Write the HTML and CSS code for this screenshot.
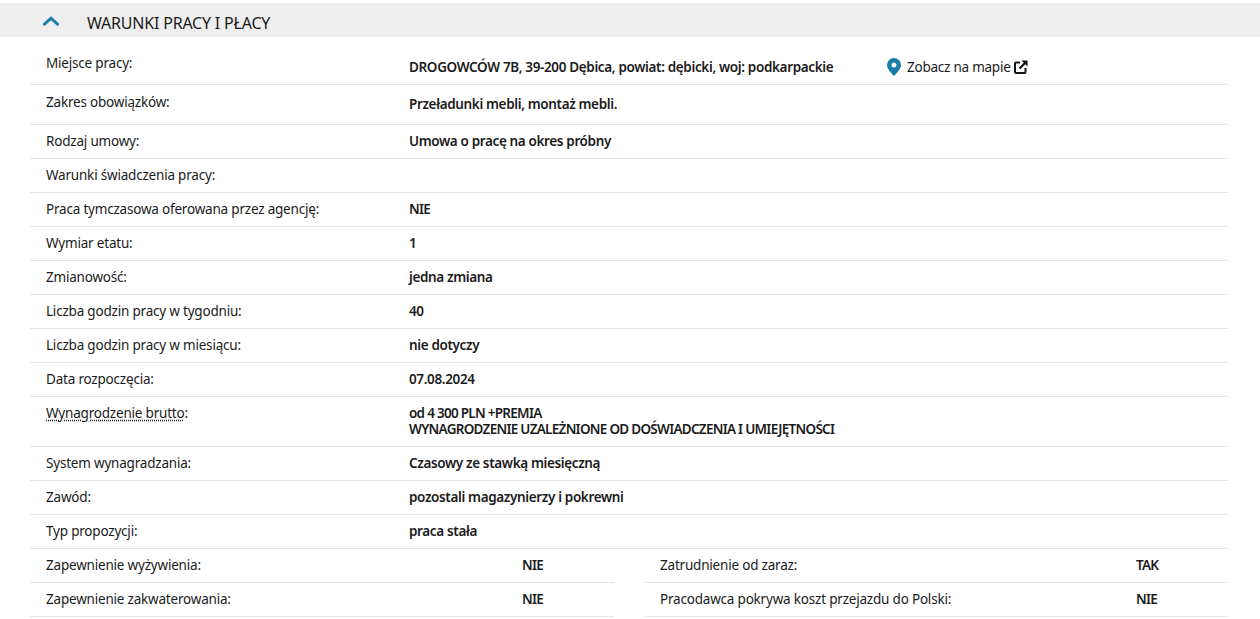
FILE: index.html
```html
<!DOCTYPE html>
<html lang="pl">
<head>
<meta charset="utf-8">
<title>Warunki pracy i płacy</title>
<link rel="stylesheet" href="styles.css">
</head>
<body>
<section class="panel">
  <header class="panel-head">
    <svg class="chevron" width="18" height="10" viewBox="0 0 18 10" aria-hidden="true"><path d="M1.500 9 9 2.200 16.500 9" fill="none" stroke="#1a7ea8" stroke-width="3"/></svg>
    <h2 class="panel-title">WARUNKI PRACY I PŁACY</h2>
  </header>
  <div class="rows">
    <div class="row row-first">
      <div class="label">Miejsce pracy:</div>
      <div class="value value-place">
        <span class="place">DROGOWCÓW 7B, 39-200 Dębica, powiat: dębicki, woj: podkarpackie</span>
        <a class="map-link">
          <svg class="pin" width="14" height="18" viewBox="0 0 14 18" aria-hidden="true"><path fill-rule="evenodd" fill="#1a7ea8" d="M7 0a7 7 0 0 1 7 7c0 3.500-3.500 7.500-7 11C3.500 14.500 0 10.500 0 7a7 7 0 0 1 7-7Zm0 4.500a2.500 2.500 0 1 0 0 5 2.500 2.500 0 0 0 0-5Z"/></svg>
          <span>Zobacz na mapie</span>
          <svg class="ext" width="14" height="14" viewBox="0 0 14 14" aria-hidden="true"><path d="M6 2.500H2A1 1 0 0 0 1 3.500v8.500a1 1 0 0 0 1 1h8.500a1 1 0 0 0 1-1V8" fill="none" stroke="#111" stroke-width="2"/><path d="M5.500 8.500 12 2" fill="none" stroke="#111" stroke-width="2.200"/><path d="M7.500.5h6v6z" fill="#111"/></svg>
        </a>
      </div>
    </div>
    <div class="row row-second"><div class="label">Zakres obowiązków:</div><div class="value">Przeładunki mebli, montaż mebli.</div></div>
    <div class="row"><div class="label">Rodzaj umowy:</div><div class="value">Umowa o pracę na okres próbny</div></div>
    <div class="row"><div class="label">Warunki świadczenia pracy:</div><div class="value"></div></div>
    <div class="row"><div class="label">Praca tymczasowa oferowana przez agencję:</div><div class="value caps">NIE</div></div>
    <div class="row"><div class="label">Wymiar etatu:</div><div class="value">1</div></div>
    <div class="row"><div class="label">Zmianowość:</div><div class="value">jedna zmiana</div></div>
    <div class="row"><div class="label">Liczba godzin pracy w tygodniu:</div><div class="value">40</div></div>
    <div class="row"><div class="label">Liczba godzin pracy w miesiącu:</div><div class="value">nie dotyczy</div></div>
    <div class="row"><div class="label">Data rozpoczęcia:</div><div class="value">07.08.2024</div></div>
    <div class="row row-tall"><div class="label"><abbr class="hint">Wynagrodzenie brutto</abbr>:</div><div class="value caps">od 4 300 PLN +PREMIA<br>WYNAGRODZENIE UZALEŻNIONE OD DOŚWIADCZENIA I UMIEJĘTNOŚCI</div></div>
    <div class="row"><div class="label">System wynagradzania:</div><div class="value">Czasowy ze stawką miesięczną</div></div>
    <div class="row"><div class="label">Zawód:</div><div class="value">pozostali magazynierzy i pokrewni</div></div>
    <div class="row"><div class="label">Typ propozycji:</div><div class="value">praca stała</div></div>
    <div class="split">
      <div class="half"><div class="label">Zapewnienie wyżywienia:</div><div class="value caps">NIE</div></div>
      <div class="half"><div class="label">Zatrudnienie od zaraz:</div><div class="value caps">TAK</div></div>
      <div class="half"><div class="label">Zapewnienie zakwaterowania:</div><div class="value caps">NIE</div></div>
      <div class="half"><div class="label">Pracodawca pokrywa koszt przejazdu do Polski:</div><div class="value caps">NIE</div></div>
    </div>
  </div>
</section>
</body>
</html>
```
FILE: styles.css
```css
* { box-sizing: border-box; }
html, body { margin: 0; padding: 0; background: #fff; }
body {
  padding-top: 3px;
  font-family: "Noto Sans", "Open Sans", sans-serif;
  font-size: 13.5px;
  line-height: 20px;
  letter-spacing: -0.2px;
  color: #1b1b1b;
  height: 619px;
  overflow: hidden;
}
.panel-head {
  height: 34px;
  background: #eeeeee;
  display: flex;
  align-items: center;
  padding-left: 42px;
}
.chevron { margin-right: 27px; margin-top: 1px; }
.panel-title {
  margin: 5px 0 0;
  font-size: 16px;
  font-weight: 400;
  letter-spacing: -0.2px;
  color: #1b1b1b;
}
.rows { padding: 0 31px 0 30px; }
.row {
  display: grid;
  grid-template-columns: 379px 1fr;
  height: 34px;
  align-items: center;
  padding-bottom: 2px;
  border-bottom: 1px solid #e6e6e6;
}
.row-first { height: 48px; align-items: start; }
.row-second { height: 40px; align-items: start; }
.row-tall { height: 50px; align-items: start; padding-top: 6px; }
.row-first .label { padding-top: 16px; }
.row-second .label { padding-top: 7px; }
.row-first .value { padding-top: 20px; }
.row-second .value { padding-top: 9px; }
.row-tall .value { padding-top: 2px; line-height: 16px; }
.label { padding-left: 16px; }
.value { font-weight: 600; letter-spacing: -0.36px; }
.caps { font-size: 13.5px; letter-spacing: -0.72px; line-height: 18px; }
.value-place { display: flex; align-items: center; letter-spacing: -0.35px; }
.place { width: 478px; flex: none; }
.map-link { display: flex; align-items: center; font-weight: 400; gap: 3px; letter-spacing: -0.24px; }
.pin { margin-right: 3px; }
.hint { text-decoration: underline dotted #1b1b1b; text-underline-offset: 2px; }
.split {
  display: grid;
  grid-template-columns: 584px 585px;
  column-gap: 30px;
}
.half {
  display: grid;
  grid-template-columns: 492px 1fr;
  height: 34px;
  align-items: center;
  padding-bottom: 2px;
  border-bottom: 1px solid #e6e6e6;
}
```
